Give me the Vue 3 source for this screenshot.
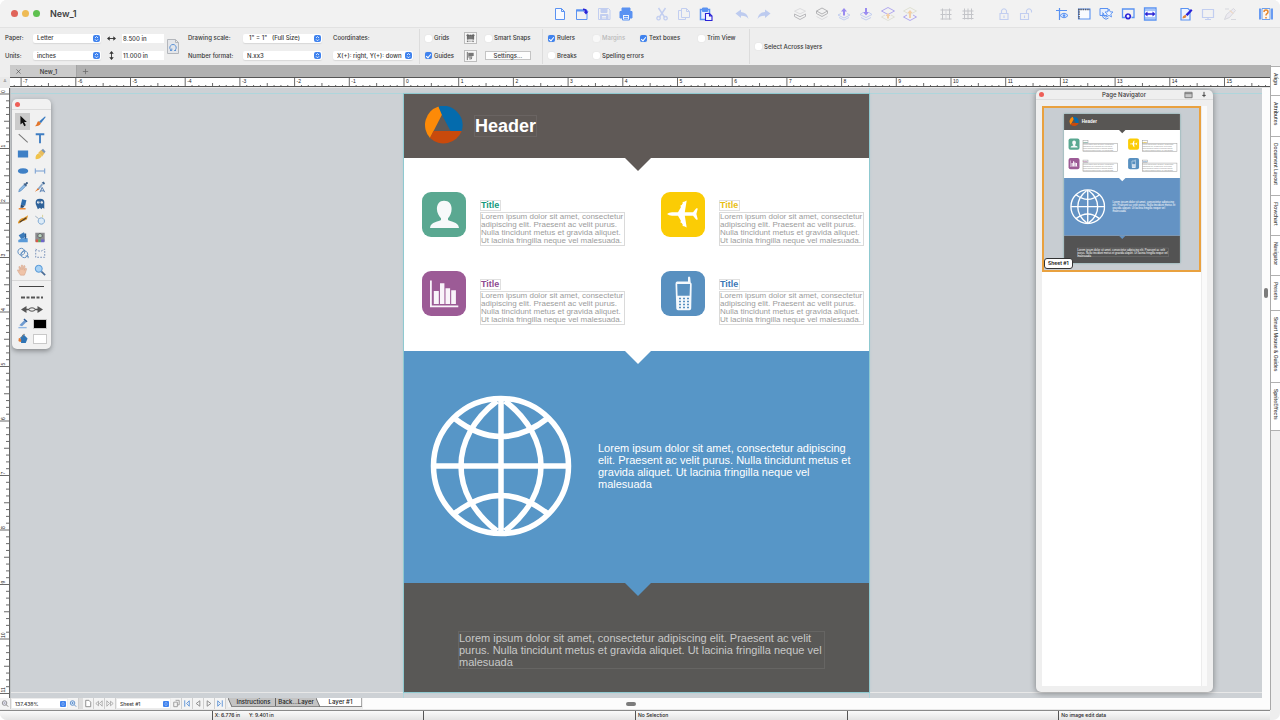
<script setup>
import { ref } from 'vue'

const B = '#5a92f2'
const D = '#2a22d6'
const F = '#c2cef0'
const G = '#c3c4c8'
const P = '#b1a8ee'
const O = '#f3cfa6'
const N = 'none'

// Each icon is a list of [path, stroke, fill, stroke width]
const toolbar = [
  [
    { name: 'New', p: [['M2.5 1.5h6l3 3v8h-9zM8.5 1.5v3h3', B, '#f8faff']] },
    { name: 'Open', p: [['M1.5 3h10.500v9.500h-10.500z', B, N], ['M1 2.500h8v2h-8z', N, B], ['M8 1.500q4 0 4 3h1.500l-2.500 3-2.500-3h1.500q0-1.500-2-1.500z', N, D]] },
    { name: 'Save', p: [['M1.500 1.500h10l1.500 1.500v9.500h-11.500z', F, N], ['M4 1.500h6v4h-6zM3.500 7.500h7.500v5h-7.500z', F, F], ['M5 9.500h4M5 11h4', '#f2f2f2', N]] },
    { name: 'Print', p: [['M3 1h8v3h-8zM1 4.500h12v6.500h-12z', B, B], ['M3.500 7.500h7v5.500h-7z', B, '#eef3fd'], ['M5 9.500h4M5 11.300h4', B, N]] },
  ],
  [
    { name: 'Cut', p: [['M3.500 1l6 9M10.500 1l-6 9', F, N, 1.4], ['M3.500 9.500a1.700 1.700 0 1 0 .1 0M10.500 9.500a1.700 1.700 0 1 0 .1 0', F, N, 1.3]] },
    { name: 'Copy', p: [['M4.500 1.500h5l3 3v6h-8zM9.500 1.500v3h3', F, N], ['M4.500 3.500h-3v9h7v-2', F, N]] },
    { name: 'Paste', p: [['M1.500 2.500h9v10h-9z', B, '#e7effd', 1.5], ['M3.500 1h5v3.500h-5z', B, B], ['M6.500 6.500h4l2.500 2.500v4.500h-6.500zM10.500 6.500v2.500h2.500', D, '#f7f7ff', 1.1]] },
  ],
  [
    { name: 'Undo', p: [['M.5 6.500l5.500-4v2.500q6.500.5 7.500 7-2.500-3.500-7.500-3.200v2.200z', N, '#bdcbef']] },
    { name: 'Redo', p: [['M13.500 6.500l-5.500-4v2.500q-6.500.5-7.500 7 2.500-3.500 7.500-3.200v2.200z', N, '#bdcbef']] },
  ],
  [
    { name: 'Send to back', p: [['M7 1.500l5.500 2.700-5.500 2.700-5.500-2.700z', '#dcdcde', N], ['M1.500 7l5.500 2.700 5.500-2.700M1.500 9.500l5.500 3 5.500-3M1.500 7v2.500M12.500 7v2.500', '#b9b9bc', N]] },
    { name: 'Bring to front', p: [['M7 1l5.500 3-5.500 3-5.500-3zM1.500 4v2.500l5.500 3 5.500-3v-2.500', '#b4b4b6', N], ['M1.500 9.500l5.500 3 5.500-3', '#dcdcde', N]] },
    { name: 'Move layer up', p: [['M4 6.500l-3 1.500 6 3 6-3-3-1.500M2 10.500l5 2.500 5-2.500', F, N], ['M7 1l3 3.500h-2v4h-2v-4h-2z', N, '#9a8cf0']] },
    { name: 'Move layer down', p: [['M4 5.500l-3 2 6 3 6-3-3-2M2 10.500l5 2.500 5-2.500', F, N], ['M7 8.500l3-3.500h-2v-4h-2v4h-2z', N, '#9a8cf0']] },
    { name: 'Above layer', p: [['M7 .5l6.500 3.500-6.500 3.500-6.500-3.500z', P, N], ['M4 8l-3.500 2 6.500 3.500 6.500-3.500-3.500-2', '#dfe0d6', N], ['M7 6l2.500 3h-1.500v2.500h-2v-2.500h-1.500z', N, O]] },
    { name: 'Below layer', p: [['M7 .5l6.500 3.500-6.500 3.500-6.500-3.500z', '#dfe0d2', N], ['M4 8l-3.500 2 6.500 3.500 6.500-3.500-3.500-2', P, N], ['M7 3l2.500 3h-1.500v5h-2v-5h-1.500z', N, O]] },
  ],
  [
    { name: 'Group', p: [['M3.500 1.500v11M10.500 1.500v11M1.500 3h11M1.500 7.500h11M1.500 12h11', G, N], ['M7 2v11', '#d5d5da', N]] },
    { name: 'Ungroup', p: [['M3.500 1.500v11M7 1.500v11M10.500 1.500v11M1.500 4h11M1.500 7.500h11M1.500 11.500h11', G, N]] },
  ],
  [
    { name: 'Lock', p: [['M3 6.500h8v6h-8zM4.500 6.500v-3q2.500-3.500 5 0v3M7 8.500v2.500', F, N, 1.1]] },
    { name: 'Unlock', p: [['M1.500 6.500h8v6h-8zM7.500 6.500v-3q2.500-3.500 5 0v2M5.500 8.500v2.500', F, N, 1.1]] },
  ],
  [
    { name: 'Show guides', p: [['M1 3.500h11M4.500 1v12', B, N, 1.2], ['M5 8.500q4-4.500 8 0-4 4.500-8 0z', B, '#dfeafd'], ['M9 7.300a1.300 1.300 0 1 0 .1 0', N, B]] },
    { name: 'Page frame', p: [['M1.500 2h11.500v10h-11.500z', B, '#f8faff', 1.1], ['M1 2.500h12M2 2v10', '#565a66', N, 1.6, '1.500 .8']] },
    { name: 'Shapes', p: [['M1 1.500h8v7h-8z', B, '#e7effd'], ['M10 2l1.200 2.800 2.800.2-2.200 2 .7 3-2.500-1.600-2.500 1.600.7-3-2.200-2 2.800-.2z', B, '#f2f6fe', .9], ['M4.500 6a3.500 3.500 0 1 0 5 5M3.500 5.500l3 5', B, N]] },
    { name: 'Certificate', p: [['M4 10.500h-2.500v-8.500h11.500v8.500h-2.500', B, N, 1.3], ['M7 7a2.300 2.300 0 1 0 .1 0', D, '#f2f2ff', 1.7]] },
    { name: 'Fit width', p: [['M1.500 1h11.500v12h-11.500z', B, '#f4f8ff', 1.3], ['M2 3h10M2 11h10', B, N], ['M1.500 7l3-2.500v1.700h5v-1.700l3 2.500-3 2.500v-1.700h-5v1.700z', N, D]] },
  ],
  [
    { name: 'Edit page', p: [['M2 1.500h7l2 2v9.500h-9z', B, '#eef4ff', 1.2], ['M12 2l1.500 1.500-5 5.500-2-1.500z', N, D], ['M3.500 11.500q0-3.500 3.500-3.500 1.500 3-3.500 3.500z', N, '#e0853c']] },
    { name: 'Presentation', p: [['M1.500 2.500h11v8h-11zM4 12.500h6M7 10.500v2', F, N, 1.2]] },
    { name: 'Annotate', p: [['M1.500 12.500l2-5 7-6 2 2-6 7zM8 12.500h5M2 2h4', '#d7d8de', '#eceaf0'], ['M7 3.500l3 3', O, N]] },
  ],
  [
    { name: 'Help', p: [['M3 1.500h8v11h-8z', '#6da0ee', '#fdf6ee'], ['M1 1.500v11M13 1.500v11', B, N, 1.8], ['M5 5q0-2 2-2t2 2q0 1-1 1.700t-1 1.800', '#e5872f', N, 1.500], ['M7 10v1.600', '#e5872f', N, 1.5]] },
  ],
]

const tools = [
  { name: 'Select', on: true, p: [['M4 1v10l2.500-2 2 4 1.800-.9-2-3.900h3.200z', N, '#111']] },
  { name: 'Brush', p: [['M13 1.500l-7 6 2 2 5.500-7z', N, '#3a7bc0'], ['M6 7.500l2 2q-1 3.500-7 3.500 2-1 2.500-3.500t2.500-2z', N, '#e2762b']] },
  { name: 'Line', p: [['M2 2.500l10.500 9.500', '#777', N, 1.2]] },
  { name: 'Text', p: [['M2 1.500h10v2.200h-3.900v9.300h-2.200v-9.300h-3.900z', N, '#3f7dc2']] },
  { name: 'Rectangle', p: [['M1 3h12v8h-12z', N, '#3f80c6']] },
  { name: 'Pen', p: [['M2 13q-1-5 3.500-7l3.500 3.500q-2 3.500-7 3.500z', N, '#f0c34a'], ['M5 5.500l3.500-3.500 4 3.500-3 4.500z', N, '#e8bd5e'], ['M8.500 2.500l2-1.500 3 3-1.500 2z', N, '#7e97b8']] },
  { name: 'Ellipse', p: [['M7 3.700a6 3.300 0 1 0 .1 0', N, '#3f80c6']] },
  { name: 'Dimension', p: [['M1.500 4v6M12.500 4v6M2 7h10', '#6a96ce', N, 1.1]] },
  { name: 'Eyedropper', p: [['M2 12.500l1-3 5-5 1.800 1.800-5 5z', '#4f86c0', '#8fbce6', .8], ['M7.500 3.500l1-1 1 .6 1.600-1.900q2-.4 1.700 1.700l-1.900 1.600.6 1-1 1z', N, '#3c5d85']] },
  { name: 'Style picker', p: [['M4 9l5-6 1.500 1.500-5 6z', N, '#8aa7c8'], ['M9 2l2-1.500 2 2-1.500 2z', N, '#3f6692'], ['M1 12.500l3.500-4 1.500 1.500z', N, '#e2762b'], ['M9.500 7.500l-2.500 5.500M9.500 7.500l3 5.500M8 11.500h3.500', '#3f6da8', N, 1]] },
  { name: 'Highlighter', p: [['M6 1.500l5 1-1.500 6.500-5-1z', N, '#2f6eae'], ['M4.500 8l4.500 1-2 2.500h-3z', N, '#24466e'], ['M2 12.500h8', '#ec8a3a', N, 1.6]] },
  { name: 'Ghost', p: [['M2 7q-1-6 5-6t5 6v5.500l-2-1-1.500 1.500-1.500-1.500-2.500 1.500z', N, '#2f6299'], ['M5 3.500a1.500 1.500 0 1 0 .1 0M9 3.500a1.500 1.500 0 1 0 .1 0', N, '#f4f7fb'], ['M5 4.500h.8M9 4.500h.8', '#1c3552', N, 1]] },
  { name: 'Measure', p: [['M1 10q2-4.500 7-5.500l5-3-1.500 5q-3 2-5.500 2l-4 3z', N, '#e69b2c'], ['M3 9.500l8-5', '#4a3b2a', N, 1.4]] },
  { name: 'Lens', p: [['M8.500 4.500a3.700 3.700 0 1 0 .1 0', '#7ba6d0', '#dcebf8', 1.1], ['M1.500 2.500l4 3', '#93a7ba', N], ['M10 1v3', '#d6cf8c', N]] },
  { name: 'Fill', p: [['M2 5l6-3.500 3 5-6 3z', N, '#3d7bb9'], ['M1.500 13v-2.500q5-3.500 11-2v4.500z', N, '#5a9ad8'], ['M10 3v6', '#2c5c90', N, 1.4]] },
  { name: 'Camera', p: [['M1.500 2h11v10.500h-11z', N, '#8c8c90'], ['M7 3a2.500 2.500 0 1 0 .1 0', '#555', '#b8d4c0'], ['M2 10h3v3h-3z', N, '#d95747'], ['M5 10h3v3h-3z', N, '#5fae58'], ['M8 10h4v3h-4z', N, '#6d66c9']] },
  { name: 'Combine', p: [['M5 1.500a4 4 0 1 0 .1 0M8.500 4.500a4 4 0 1 0 .1 0', '#4d82ba', N], ['M5 8l3-4M10 10.500h3v2.500', '#4d82ba', N]] },
  { name: 'Marquee', p: [['M2 2.500l3 2 3 .5 4.500-2.500v9.500h-10.500z', '#6b86b3', N, 1, '2 1.500']] },
  { name: 'Pan', p: [['M4 13q-3-4-3.500-6 1-.6 2.700 1.200l-1-5q1-.8 1.500.3l1 3 .3-5q1-.8 1.500 0l.3 5 1.200-4.500q1-.5 1.400.4l-.9 5 1.500-2.400q1-.2 1.200.8l-1.700 5.200-1 2z', '#cf9c82', '#efc3a8', .6]] },
  { name: 'Zoom', p: [['M8.500 8.500l4.500 4.500', '#4a6c95', N, 2], ['M5.500 1.500a4 4 0 1 0 .1 0', '#5c9cd8', '#a8d2f5', 1.2]] },
]

const inch = 54.7
const hTicks = Array.from({ length: 8 * 23 + 1 }, (_, i) => i - 57).map(i => ({ i, x: 394 + (i * inch) / 8, y: i % 8 === 0 ? 0 : i % 4 === 0 ? 5 : 7 }))
const vTicks = Array.from({ length: 8 * 11 + 1 }, (_, i) => i).map(i => ({ i, y: 6 + (i * 54.5) / 8, x: i % 8 === 0 ? 0 : i % 4 === 0 ? 4 : 6 }))

const lines = ['Lorem ipsum dolor sit amet, consectetur', 'adipiscing elit. Praesent ac velit purus.', 'Nulla tincidunt metus et gravida aliquet.', 'Ut lacinia fringilla neque vel malesuada.']
const blueLines = ['Lorem ipsum dolor sit amet, consectetur adipiscing', 'elit. Praesent ac velit purus. Nulla tincidunt metus et', 'gravida aliquet. Ut lacinia fringilla neque vel', 'malesuada']
const footLines = ['Lorem ipsum dolor sit amet, consectetur adipiscing elit. Praesent ac velit', 'purus. Nulla tincidunt metus et gravida aliquet. Ut lacinia fringilla neque vel', 'malesuada']
const features = [
  { icon: 'person', tone: 'green', bg: '#5aa891', x: 18, y: 98 },
  { icon: 'plane', tone: 'yellow', bg: '#fbcc05', x: 257, y: 98 },
  { icon: 'chart', tone: 'purple', bg: '#9c5b96', x: 18, y: 177 },
  { icon: 'phone', tone: 'blue', bg: '#5890c0', x: 257, y: 177 },
]
const panels = ['Align', 'Attributes', 'Document Layout', 'Flowchart', 'Navigator', 'Presets', 'Smart Mouse & Guides', 'SpriteEffects']

const checks = ref({ grids: false, guides: true, snaps: false, rulers: true, margins: false, text: true, trim: false, breaks: false, spelling: false, across: false })
const pager = [
  ['M3 4h4v5h-4zM5 2h4v5h-2', 'Duplicate sheet', '#999'],
  ['M3 2v7M8 2.500l-3 3 3 3z', 'First sheet', '#5a92d6'],
  ['M7.500 2.500l-4 3 4 3z', 'Previous sheet', '#888'],
  ['M3.500 2.500l4 3-4 3z', 'Next sheet', '#888'],
  ['M8 2v7M3 2.500l3 3-3 3z', 'Last sheet', '#5a92d6'],
]
</script>

<template>
  <div class="app">
    <svg class="defs" aria-hidden="true">
      <symbol id="logo" viewBox="0 0 40 40">
        <path fill="#fd8a07" d="M15.500 .4A19.500 19.500 0 0 0 7 32L19.300 8z" />
        <path fill="#046bad" d="M15.500 .4A19.500 19.500 0 0 1 38.700 25H27.500L18.500 8z" />
        <path fill="#c94a0c" d="M7 32L10.500 25h28.200A19.500 19.500 0 0 1 7 32z" />
      </symbol>
      <symbol id="person" viewBox="0 0 44 45">
        <path fill="#f7f9fa" d="M22 8.700c5 0 7.700 3.300 7.600 8.300 0 4-1.600 7-3.600 9.300v1.700c1.500 1.500 10.500 1.500 11 8h-29c.5-6.500 9.500-6.500 11-8v-1.700c-2-2.300-4.100-5.300-4.100-9.300 0-5 2.600-8.300 7.100-8.300z" />
      </symbol>
      <symbol id="chart" viewBox="0 0 44 45">
        <path fill="#f9f4fa" d="M8 9.500h1.800v25h26.500v1.700H8zM11.800 20h5v13h-5zM18 12.300h4.400V33H18zM23.500 17.300h4.600V33h-4.600zM29.200 19.300h4.700V33h-4.700z" />
      </symbol>
      <symbol id="plane" viewBox="0 0 44 45">
        <path fill="#fff" d="M6 22q2-1.700 5-1.700h6l3-5.300-.8-1.300 1.500-.6 1.200-2-.5-1 1.800-.4 2.500-1.200-1.900 11.800h8.200l3.300-4 1.500.3-1.400 5.400 1.400 5.400-1.500.3-3.300-4h-8.200l1.900 11.800-2.500-1.200-1.800-.4.5-1-1.200-2-1.500-.6.8-1.300-3-5.300h-6q-3 0-5-1.700z" />
      </symbol>
      <symbol id="phone" viewBox="0 0 44 45">
        <path fill="#f4f8fc" fill-rule="evenodd" d="M16 10.500h11V6.500q1-2 2.200 0l.5 5q1 .5 1 2l-.5 24q-.2 1.800-1.700 1.800h-11.500q-1.500 0-1.700-1.800l-.8-24.500q0-2.500 1.500-2.500zM16.200 13l.4 11.800h12L29 13z" />
        <path stroke="#5890c0" stroke-width="1.700" stroke-dasharray="2 2" fill="none" d="M18 27.500h10M18 30.500h10M18 33.500h10M18 36.500h10" />
      </symbol>
      <symbol id="globe" viewBox="0 0 142 142">
        <g fill="none" stroke="#fff" stroke-width="5.500">
          <circle cx="71" cy="71" r="67.500" />
          <path d="M71 4v134M4 71h134M67 6C19 43 19 99 67 136M75 6c48 37 48 93 0 130" />
          <path d="M24 23q47 37 94 0M24 119q47-37 94 0" />
        </g>
      </symbol>
    </svg>

    <header class="titlebar">
      <i class="dot red"></i><i class="dot amber"></i><i class="dot lime"></i>
      <h1>New_1</h1>
      <nav class="toolbar" aria-label="Toolbar">
        <div v-for="(g, gi) in toolbar" :key="gi" class="tgroup">
          <button v-for="t in g" :key="t.name" type="button" :aria-label="t.name">
            <svg viewBox="0 0 14 14"><path v-for="(s, i) in t.p" :key="i" :d="s[0]" :stroke="s[1]" :fill="s[2]" :stroke-width="s[3] || 1" :stroke-dasharray="s[4]" /></svg>
          </button>
        </div>
      </nav>
    </header>

    <section class="options">
      <div class="grp paper">
        <label for="paper">Paper:</label>
        <select id="paper"><option>Letter</option></select>
        <svg class="arrow" viewBox="0 0 10 10"><path d="M2 5h6" stroke="#333" /><path d="M0 5l3-2.500v5zM10 5l-3-2.500v5z" fill="#333" /></svg>
        <input type="text" value="8.500 in" aria-label="Width" />
        <label for="units">Units:</label>
        <select id="units"><option>inches</option></select>
        <svg class="arrow" viewBox="0 0 10 10"><path d="M5 2v6" stroke="#333" /><path d="M5 0l-2.500 3h5zM5 10l-2.500-3h5z" fill="#333" /></svg>
        <input type="text" value="11.000 in" aria-label="Height" />
        <button type="button" class="rotate" aria-label="Rotate page">
          <svg viewBox="0 0 12 15"><path d="M.5.500h8l3 3v11h-11zM8.500.500v3h3" fill="#e4e6ea" stroke="#b3b6bb" /><path d="M4.500 11.500a3.200 3.200 0 1 1 3 0M3 11.500h1.800v-2M9 11.500h-1.700" fill="none" stroke="#5d93d6" /></svg>
        </button>
      </div>
      <div class="grp scale">
        <label for="scale">Drawing scale:</label>
        <select id="scale" class="in"><option>1" = 1"&nbsp;&nbsp; (Full Size)</option></select>
        <label for="fmt">Number format:</label>
        <select id="fmt"><option>N.xx3</option></select>
      </div>
      <div class="grp coords">
        <label for="coords">Coordinates:</label>
        <select id="coords"><option>X(+): right, Y(+): down</option></select>
      </div>
      <div class="grp grids">
        <label class="ck"><input v-model="checks.grids" type="checkbox" />Grids</label>
        <button type="button" class="ib" aria-label="Grid settings"><svg viewBox="0 0 12 11"><path d="M2 2h8v5H2z" fill="#777" /><path d="M1.500 2.500h9M2 9h8M3 1v9M9 1v9" stroke="#555" stroke-dasharray="1 1" /></svg></button>
        <label class="ck"><input v-model="checks.snaps" type="checkbox" />Smart Snaps</label>
        <label class="ck"><input v-model="checks.guides" type="checkbox" />Guides</label>
        <button type="button" class="ib" aria-label="Guide settings"><svg viewBox="0 0 12 11"><path d="M3.500 2h6v3.500h-6z" fill="#777" /><path d="M2.500 1v9M3 6.500h5M5.500 7v2.500M7 7v2" stroke="#666" /></svg></button>
        <button type="button" class="settings">Settings...</button>
      </div>
      <div class="grp view">
        <label class="ck"><input v-model="checks.rulers" type="checkbox" />Rulers</label>
        <label class="ck dim"><input v-model="checks.margins" type="checkbox" disabled />Margins</label>
        <label class="ck"><input v-model="checks.text" type="checkbox" />Text boxes</label>
        <label class="ck"><input v-model="checks.trim" type="checkbox" />Trim View</label>
        <label class="ck"><input v-model="checks.breaks" type="checkbox" />Breaks</label>
        <label class="ck wide"><input v-model="checks.spelling" type="checkbox" />Spelling errors</label>
      </div>
      <div class="grp across">
        <label class="ck"><input v-model="checks.across" type="checkbox" />Select Across layers</label>
      </div>
    </section>

    <main class="main">
      <div class="center">
        <div class="tabs">
          <div class="tab"><button type="button" aria-label="Close tab"><svg viewBox="0 0 6 6"><path d="M.5.500l5 5M5.500.500l-5 5" stroke="#555" stroke-width=".8" /></svg></button><span>New_1</span></div>
          <button type="button" aria-label="New tab"><svg viewBox="0 0 8 8"><path d="M4 1v6M1 4h6" stroke="#666" stroke-width=".8" /></svg></button>
        </div>
        <div class="rulerrow">
          <span class="corner">A</span>
          <svg class="hruler">
            <path v-for="t in hTicks" :key="t.i" :d="`M${t.x} ${t.y}V10`" stroke="#444" stroke-width=".8" />
            <template v-for="t in hTicks" :key="'l' + t.i"><text v-if="t.i % 8 === 0" :x="t.x + 2" y="5">{{ t.i / 8 }}</text></template>
          </svg>
        </div>
        <div class="work">
          <div class="vr">
            <svg>
              <path v-for="t in vTicks" :key="t.i" :d="`M${t.x} ${t.y}H9`" stroke="#444" stroke-width=".8" />
              <template v-for="t in vTicks" :key="'l' + t.i"><text v-if="t.i % 8 === 0" :transform="`translate(5 ${t.y - 1}) rotate(-90)`">{{ t.i / 8 }}</text></template>
            </svg>
          </div>
          <div class="canvas">
            <i class="guide top"></i><i class="guide bottom"></i><i class="guide left"></i><i class="guide right"></i>
            <article class="doc">
              <header class="dhead">
                <svg class="dlogo"><use href="#logo" /></svg>
                <h2>Header</h2>
              </header>
              <section class="dfeat">
                <div v-for="f in features" :key="f.icon" class="feat">
                  <div class="tile" :class="f.tone"><svg><use :href="'#' + f.icon" /></svg></div>
                  <div class="ftext">
                    <h3 :class="f.tone">Title</h3>
                    <p><span v-for="l in lines" :key="l">{{ l }}</span></p>
                  </div>
                </div>
              </section>
              <section class="dblue">
                <svg class="globe"><use href="#globe" /></svg>
                <p><span v-for="l in blueLines" :key="l">{{ l }}</span></p>
              </section>
              <footer class="dfoot">
                <p><span v-for="l in footLines" :key="l">{{ l }}</span></p>
              </footer>
            </article>

            <aside class="palette" aria-label="Tools">
              <div class="phead"><i></i></div>
              <div class="tools">
                <button v-for="t in tools" :key="t.name" type="button" :class="{ on: t.on }" :aria-label="t.name">
                  <svg viewBox="0 0 14 14"><path v-for="(s, i) in t.p" :key="i" :d="s[0]" :stroke="s[1]" :fill="s[2]" :stroke-width="s[3] || 1" :stroke-dasharray="s[4]" /></svg>
                </button>
              </div>
              <div class="styles">
                <svg viewBox="0 0 26 36"><path d="M0 5.500h25" stroke="#444" /><path d="M2 16.500h22" stroke="#555" stroke-width="2" stroke-dasharray="4 1.500 3 1.500" /><path d="M5 28.500h16" stroke="#555" stroke-width="1.500" /><path d="M2 28.500l5.500-3.500v7zM24 28.500l-5.500-3.500v7z" fill="#555" /><ellipse cx="13" cy="28.500" rx="3" ry="1.700" fill="#eee" stroke="#555" /></svg>
              </div>
              <div class="swatches">
                <svg viewBox="0 0 12 12"><path d="M2 8l6-6 2 2-5 5z" fill="#6f9bd0" /><path d="M7 1l3.500 3" stroke="#2f5c95" stroke-width="1.500" /><path d="M1 10.500h9" stroke="#8fb6e2" stroke-width="1.500" /></svg>
                <button type="button" class="black" aria-label="Line colour"></button>
                <svg viewBox="0 0 12 12"><path d="M3 5l4-3 4 4-2 5h-5z" fill="#2f74b5" /><path d="M1.500 5.500q3 0 2.500 4-2.500.5-3-1z" fill="#e27b35" /><path d="M5 5q0-4 3-3.500" stroke="#777" fill="none" /></svg>
                <button type="button" class="white" aria-label="Fill colour"></button>
              </div>
            </aside>

            <aside class="navigator">
              <div class="nhead">
                <i></i><h2>Page Navigator</h2>
                <svg class="list" viewBox="0 0 10 8"><path d="M1 1h8v6h-8z" fill="#c9c9c9" stroke="#777" /><path d="M1 2.500h8" stroke="#777" /></svg>
                <svg class="pin" viewBox="0 0 6 8"><path d="M3 1v4M1 5h4M3 5v2" stroke="#333" /></svg>
              </div>
              <div class="nbody">
                <div class="nlist">
                  <div class="thumb">
                    <svg viewBox="0 0 465 598" class="mini">
                      <path fill="#fff" d="M0 0h465v598h-465z" />
                      <path fill="#585654" d="M0 0h465v64H246.500l-13 13-13-13H0z" />
                      <use href="#logo" x="20" y="11" width="40" height="40" />
                      <text x="71" y="38" class="mh">Header</text>
                      <g v-for="f in features" :key="f.icon">
                        <rect :x="f.x" :y="f.y" width="44" height="45" rx="8" :fill="f.bg" />
                        <use :href="'#' + f.icon" :x="f.x" :y="f.y" width="44" height="45" />
                        <rect :x="f.x + 58" :y="f.y + 8" width="20" height="10" class="bx" />
                        <text :x="f.x + 58" :y="f.y + 17" class="mt" :fill="f.bg">Title</text>
                        <rect :x="f.x + 58" :y="f.y + 20" width="138" height="33" class="bx" />
                        <text v-for="(l, i) in lines" :key="i" :x="f.x + 58" :y="f.y + 27 + i * 8" class="mb">{{ l }}</text>
                      </g>
                      <path fill="#6493c4" d="M0 257h465v232H0z" />
                      <path fill="#fff" d="M220.500 257l13 13 13-13z" />
                      <use href="#globe" x="24" y="301" width="142" height="142" />
                      <text v-for="(l, i) in blueLines" :key="'b' + i" x="194" :y="359 + i * 12" class="ml">{{ l }}</text>
                      <path fill="#535353" d="M0 489h465v109H0z" />
                      <path fill="#6493c4" d="M220.500 489l13 13 13-13z" />
                      <rect x="54" y="538" width="366" height="35" class="bx lt" />
                      <text v-for="(l, i) in footLines" :key="'f' + i" x="54" :y="548 + i * 12" class="ml">{{ l }}</text>
                    </svg>
                    <span class="sheet">Sheet #1</span>
                  </div>
                </div>
                <div class="gutter"></div>
              </div>
            </aside>
          </div>
          <div class="vscroll"><i></i></div>
        </div>
        <div class="bottom">
          <button type="button" aria-label="Zoom out"><svg viewBox="0 0 11 11"><circle cx="5" cy="5" r="2.500" fill="#eef" stroke="#888" /><path d="M7 7l2 2M4 5h2" stroke="#777" /></svg></button>
          <select class="z" aria-label="Zoom level"><option>137.438%</option></select>
          <button type="button" aria-label="Zoom in"><svg viewBox="0 0 11 11"><circle cx="5" cy="5" r="2.500" fill="#def" stroke="#5a8ac6" /><path d="M7 7l2 2M4 5h2M5 4v2" stroke="#5a8ac6" /></svg></button>
          <span class="gap"></span>
          <button type="button" aria-label="New sheet"><svg viewBox="0 0 11 11"><path d="M3 2h3.500l2 2v5h-5.500z" fill="#fff" stroke="#888" /></svg></button>
          <button type="button" aria-label="Back"><svg viewBox="0 0 11 11"><path d="M5 3l-3 2.500 3 2.500zM9 2.500l-3 3 3 3z" fill="none" stroke="#999" stroke-width=".8" /></svg></button>
          <button type="button" aria-label="Forward"><svg viewBox="0 0 11 11"><path d="M6 3l3 2.500-3 2.500zM2 2.500l3 3-3 3z" fill="none" stroke="#999" stroke-width=".8" /></svg></button>
          <select class="s" aria-label="Sheet"><option>Sheet #1</option></select>
          <button v-for="p in pager" :key="p[1]" type="button" :aria-label="p[1]"><svg viewBox="0 0 11 11"><path :d="p[0]" fill="none" :stroke="p[2]" /></svg></button>
          <div class="layers">
            <svg viewBox="0 0 4 9"><path d="M0 0l4 9h-4z" fill="#f4f4f4" /><path d="M0 0l4 9" stroke="#555" stroke-width=".8" /></svg>
            <button type="button">Instructions</button>
            <button type="button">Back...Layer</button>
            <svg viewBox="0 0 4 9"><path d="M0 0h4v9z" fill="#fff" /><path d="M0 0l4 9" stroke="#555" stroke-width=".8" /></svg>
            <button type="button" class="cur">Layer #1</button>
          </div>
          <div class="hscroll"><i></i></div>
        </div>
      </div>
      <nav class="side" aria-label="Panels">
        <button v-for="p in panels" :key="p" type="button">{{ p }}</button>
      </nav>
    </main>
    <footer class="status">
      <span></span><span class="xy"><b>X: 6.776 in</b><b>Y: 9.401 in</b></span><span></span><span>No Selection</span><span></span><span>No image edit data</span>
    </footer>
  </div>
</template>

<style>
body { background: #fff; }
</style>

<style scoped>
* { box-sizing: border-box; margin: 0; }
.app { display: flex; flex-direction: column; height: 100vh; min-height: 720px; overflow: hidden; border-radius: 7px; background: #eeeeee; color: #383838; font: 500 6px/8px Inter, "Liberation Sans", sans-serif; }
.defs { position: absolute; width: 0; height: 0; }
svg { display: block; }
button, input, select { font: inherit; color: inherit; padding: 0; border: 0; background: none; border-radius: 0; }
select { appearance: none; }

.titlebar { display: flex; align-items: center; height: 28px; padding: 0 7px 0 11px; background: #f2f2f2; border-bottom: 1px solid #e2e2e2; }
.dot { width: 7px; height: 7px; border-radius: 50%; margin-right: 4px; }
.dot.red { background: #e0645a; }
.dot.amber { background: #eebb55; }
.dot.lime { background: #5fc150; }
.titlebar h1 { margin-left: 6px; font-size: 9px; line-height: 12px; font-weight: 600; color: #404040; }
.toolbar { display: flex; gap: 22px; margin-left: auto; }
.tgroup { display: flex; gap: 8px; }
.tgroup button, .tgroup svg { width: 14px; height: 14px; }

.options { display: flex; height: 37px; padding: 1px 0 1px 5px; background: #eeeeee; }
.grp { display: grid; grid-template-rows: 18px 17px; align-items: center; align-content: start; white-space: nowrap; }
.grp select { height: 9px; padding: 0 10px 0 4px; border-radius: 2px; box-shadow: 0 1px 1px #d8d8d8; width: 100%; background: url("data:image/svg+xml,%3Csvg xmlns='http://www.w3.org/2000/svg' viewBox='0 0 7 7'%3E%3Crect width='7' height='7' rx='2' fill='%233f82ee'/%3E%3Cpath d='M2 3l1.500-1.500L5 3M2 4.300l1.500 1.500L5 4.300' fill='none' stroke='%23fff' stroke-width='.8'/%3E%3C/svg%3E") right 1px center / 7px 7px no-repeat #fff; }
.grp select.in { padding-left: 6px; }
.grp input[type="text"] { width: 42px; height: 9px; padding: 0 1px; background: #fff; }
.arrow { width: 9px; height: 9px; }
.paper { grid-template-columns: 28px 68px 21px 42px 15px; }
.paper .arrow { justify-self: center; }
.rotate { grid-column: 5; grid-row: 1 / 3; justify-self: end; width: 12px; height: 15px; }
.scale { grid-template-columns: 55px 79px; margin-left: 9px; }
.coords { grid-template-columns: 80px; margin-left: 11px; }
.grids { grid-template-columns: 39px 21px 57px; margin-left: 6px; padding-left: 5px; }
.grids, .view, .across { border-left: 1px solid #dcdcdc; }
.ck { display: flex; align-items: center; gap: 2px; }
.ck input { appearance: none; width: 7px; height: 7px; border-radius: 2px; background: #fff; display: grid; place-items: center; box-shadow: 0 0 1px #ccc; }
.ck input:checked { background: #3f82ee; }
.ck input:checked::after { content: ""; width: 2px; height: 4px; border: solid #fff; border-width: 0 1px 1px 0; transform: rotate(40deg); }
.dim { color: #b9b9b9; }
.dim input { opacity: .6; }
.ib { width: 13px; height: 12px; background: #f7f7f7; border: 1px solid #bdbdbd; }
.ib svg { width: 11px; height: 10px; }
.settings { width: 46px; height: 9px; background: #fdfdfd; border: 1px solid #c4c4c4; line-height: 7px; }
.view { grid-template-columns: 45px 47px 58px 46px; padding-left: 5px; }
.wide { grid-column: span 2; }
.across { grid-template-rows: 35px; padding-left: 5px; margin-left: 5px; }

.main { display: flex; flex: 1; min-height: 0; }
.center { display: flex; flex-direction: column; flex: 1; min-width: 0; }
.tabs { display: flex; height: 12px; margin-left: 10px; background: #b1b1b1; }
.tabs button { width: 16px; display: grid; place-items: center; }
.tab { display: flex; width: 67px; background: #cbcbcb; border-right: 1px solid #a5a5a5; color: #333; }
.tab span { flex: 1; text-align: center; line-height: 14px; padding-right: 5px; }
.tab svg { width: 5px; height: 5px; }
.tabs svg { width: 7px; }
.rulerrow { display: flex; height: 11px; border-bottom: 1px solid #e8e8e8; background: #fff; }
.corner { width: 10px; background: #e9e9e9; text-align: center; color: #888; font-size: 4px; }
.hruler { flex: 1; min-width: 0; height: 10px; border: solid #555; border-width: 1px 0; background: #fff; overflow: hidden; }
.hruler text, .vr text { font: 5px "Liberation Sans", sans-serif; fill: #222; }
.work { display: flex; flex: 1; min-height: 0; }
.vr { width: 10px; overflow: hidden; background: #fff; border-right: 1px solid #666; }
.vr svg { width: 9px; height: 100%; }
.canvas { position: relative; flex: 1; min-width: 0; overflow: hidden; background: #cdd1d5; border-left: 1px solid #bfc3c5; }
.vscroll { width: 8px; background: #fcfcfc; display: flex; align-items: center; justify-content: center; }
.vscroll i { width: 4px; height: 10px; border-radius: 2px; background: #7c7c7c; margin-bottom: 200px; }
.guide { position: absolute; background: #aed6dc; }
.guide.top { left: 0; right: 0; top: 5px; height: 1px; }
.guide.bottom { left: 0; right: 0; top: 604px; height: 1px; }
.guide.left { left: 392px; top: 5px; bottom: 0; width: 1px; }
.guide.right { left: 858px; top: 0; bottom: 0; width: 1px; }

.doc { position: absolute; left: 393px; top: 6px; width: 465px; font-family: "Liberation Sans", sans-serif; font-weight: 400; background: #fff; box-shadow: 0 0 0 1px #8fc9d0, 0 0 3px #a3c9cd; }
.doc p span { display: block; white-space: nowrap; }
.dhead, .dfeat, .dblue { position: relative; }
.dhead::after, .dfeat::after, .dblue::after { content: ""; position: absolute; z-index: 1; top: 100%; left: 50%; margin-left: -12px; border: 13px solid transparent; border-bottom: 0; border-top-color: #5f5956; }
.dfeat::after { border-top-color: #fff; }
.dblue::after { border-top-color: #5796c7; }
.dhead { display: flex; align-items: center; gap: 10px; height: 64px; padding: 0 0 1px 20px; background: #5f5956; }
.dlogo { width: 40px; height: 40px; margin-left: -1px; margin-right: 1px; }
.dhead h2 { font-size: 18px; line-height: 20px; font-weight: 700; color: #fff; border: 1px solid #6a6462; }
.dfeat { display: grid; grid-template-columns: 239px 1fr; grid-template-rows: 45px 45px; row-gap: 34px; height: 193px; padding: 34px 0 0 18px; }
.feat { display: flex; gap: 14px; }
.tile { width: 44px; height: 45px; border-radius: 9px; flex: none; }
.tile svg { width: 44px; height: 45px; }
.tile.green { background: #5aa891; }
.tile.yellow { background: #fbcc05; }
.tile.purple { background: #9c5b96; }
.tile.blue { background: #5890c0; }
.ftext { padding-top: 8px; }
.ftext h3 { width: 21px; font-size: 9px; line-height: 9px; font-weight: 700; border: 1px solid #e0e0e0; margin-bottom: 1px; }
h3.green { color: #14997c; }
h3.yellow { color: #e8be13; }
h3.purple { color: #8e4a91; }
h3.blue { color: #3a76b5; }
.ftext p { width: 145px; font-size: 8px; line-height: 8px; color: #9c9c9c; border: 1px solid #dadada; }
.dblue { display: flex; align-items: center; gap: 26px; height: 232px; padding: 0 0 2px 26px; background: #5796c7; color: #fff; font-size: 11px; line-height: 12px; }
.globe { width: 142px; height: 142px; flex: none; }
.dfoot { height: 109px; padding: 48px 44px 0 54px; background: #595856; color: #c8c8c8; font-size: 11px; line-height: 12px; }
.dfoot p { border: 1px solid #666563; }

.palette { position: absolute; left: 1px; top: 11px; width: 39px; padding-bottom: 5px; background: #f1f1f1; border-radius: 5px; box-shadow: 0 2px 5px rgba(0, 0, 0, .35); }
.phead { height: 11px; padding: 3px; border-bottom: 1px solid #dcdcdc; }
.phead i, .nhead i { display: block; width: 5px; height: 5px; border-radius: 50%; background: #ee5f58; }
.tools { display: grid; grid-template-columns: 15px 15px; gap: 0 2px; grid-auto-rows: 1fr; height: 165px; margin: 3px 3px 2px; }
.tools button { display: grid; place-items: center; }
.tools svg { width: 12px; height: 12px; }
.tools .on { background: #cbcbcb; }
.styles { border-top: 1px solid #d8d8d8; padding-left: 7px; }
.styles svg { width: 26px; height: 36px; }
.swatches { display: grid; grid-template-columns: 12px 13px; grid-auto-rows: 11px; gap: 4px; padding: 1px 0 0 5px; align-items: center; }
.swatches svg { width: 12px; height: 11px; }
.swatches button { width: 14px; height: 10px; border: 1px solid #c9c9c9; }
.swatches .black { background: #000; }
.swatches .white { background: #fff; }

.navigator { position: absolute; right: 49px; top: 2px; bottom: 6px; width: 177px; display: flex; flex-direction: column; background: #efefef; border-radius: 5px; box-shadow: 0 1px 6px rgba(0, 0, 0, .4); padding: 0 6px 6px; }
.nhead { display: flex; align-items: center; height: 10px; margin: 0 -6px 6px; padding: 0 6px 0 3px; border-bottom: 1px solid #dedede; }
.nhead h2 { flex: 1; font-size: 6px; font-weight: 500; text-align: center; padding-left: 20px; }
.nhead .list { width: 9px; height: 8px; margin-right: 8px; }
.nhead .pin { width: 6px; height: 7px; }
.nbody { display: flex; flex: 1; min-height: 0; }
.nlist { flex: 1; background: #fff; }
.gutter { width: 6px; background: #fafafa; border-left: 1px solid #ececec; }
.thumb { position: relative; height: 166px; border: 2px solid #e9a13f; background: #c8cdd2; padding: 6px 0 0 20px; }
.mini { width: 116px; height: 149px; box-shadow: 0 0 2px #6fa9a9; }
.mini text { font-family: "Liberation Sans", sans-serif; font-weight: 400; }
.mini .mh { font-size: 18px; font-weight: 700; fill: #fff; }
.mini .mt { font-size: 9px; font-weight: 700; }
.mini .mb { font-size: 7px; fill: #888; }
.mini .ml { font-size: 11px; fill: #fff; }
.mini .bx { fill: none; stroke: #999; stroke-width: 2px; }
.mini .lt { stroke: #777; }
.sheet { position: absolute; left: 0; bottom: 1px; padding: 0 3px; font-size: 5px; line-height: 9px; font-weight: 600; color: #111; background: #fff; border: 1px solid #333; border-radius: 3px; }

.bottom { display: flex; height: 12px; background: #ececec; border-bottom: 1px solid #e8e8e8; font-size: 5px; }
.bottom > button { width: 11px; background: #f4f4f4; border-right: 1px solid #cfcfcf; }
.bottom > button svg { width: 10px; height: 11px; }
.bottom select { margin: 1px; height: 9px; padding: 0 8px 0 3px; background: url("data:image/svg+xml,%3Csvg xmlns='http://www.w3.org/2000/svg' viewBox='0 0 6 6'%3E%3Crect width='6' height='6' rx='1' fill='%233f82ee'/%3E%3Cpath d='M2 2.500L3 1.500l1 1M2 3.500l1 1 1-1' fill='none' stroke='%23fff' stroke-width='.6'/%3E%3C/svg%3E") right 1px center / 6px 6px no-repeat #fff; }
.z { width: 55px; }
.s { width: 53px; }
.gap { width: 4px; background: #ddd; }
.layers { display: flex; margin-left: 2px; height: 9px; border-bottom: 1px solid #888; background: #c4c4c4; font-size: 6px; font-weight: 500; }
.layers svg { width: 4px; height: 9px; }
.layers button { width: 44px; border: solid #666; border-width: 0 1px 0 0; line-height: 8px; color: #222; }
.layers button + button { width: 40px; border-right-width: 0; }
.layers .cur { width: 42px; background: #fff; border-right: 1px solid #aaa; }
.hscroll { flex: 1; margin-left: 1px; background: #fcfcfc; display: flex; align-items: center; }
.hscroll i { width: 10px; height: 4px; border-radius: 2px; background: #7c7c7c; margin-left: 29%; }

.side { width: 10px; border-left: 1px solid #aaa; background: #f0f0f0; display: flex; flex-direction: column; padding-top: 1px; }
.side button { writing-mode: vertical-rl; padding: 6px 0 10px; width: 9px; background: #fff; border-top: 1px solid #b0b0b0; font-size: 5px; line-height: 9px; text-align: left; white-space: nowrap; color: #444; }
.side button:last-child { border-bottom: 1px solid #b0b0b0; }
.status { display: grid; grid-template-columns: repeat(6, 1fr); height: 10px; margin-right: 10px; border-top: 1px solid #8a8a8a; background: linear-gradient(#fafafa, #e4e4e4); font-size: 5px; line-height: 9px; color: #222; }
.status span + span { border-left: 1px solid #555; padding-left: 2px; }
.status b { font-weight: 500; }
.status .xy { display: flex; gap: 9px; }
</style>
